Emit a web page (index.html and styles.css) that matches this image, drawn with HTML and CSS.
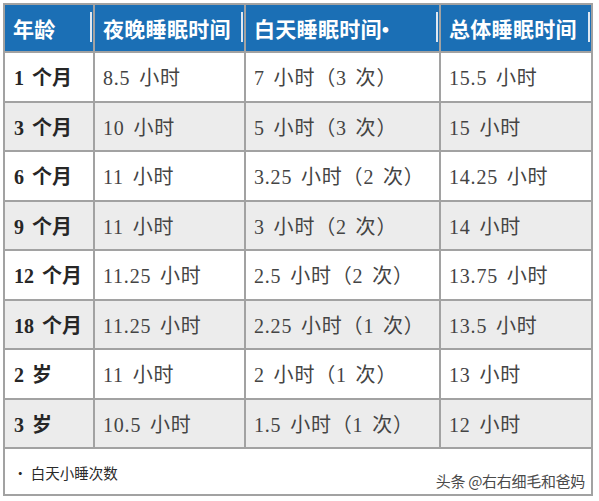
FILE: index.html
```html
<!DOCTYPE html>
<html lang="zh">
<head>
<meta charset="utf-8">
<link rel="stylesheet" href="styles.css">
</head>
<body>
<table class="sleep">
  <colgroup>
    <col class="c1"><col class="c2"><col class="c3"><col class="c4">
  </colgroup>
  <thead>
    <tr class="head">
      <th><span class="lbl">年龄</span></th>
      <th><span class="lbl">夜晚睡眠时间</span></th>
      <th><span class="lbl">白天睡眠时间•</span></th>
      <th><span class="lbl">总体睡眠时间</span></th>
    </tr>
  </thead>
  <tbody>
    <tr class="odd"><td class="age">1 个月</td><td>8.5 小时</td><td>7 小时（3 次）</td><td>15.5 小时</td></tr>
    <tr class="even"><td class="age">3 个月</td><td>10 小时</td><td>5 小时（3 次）</td><td>15 小时</td></tr>
    <tr class="odd"><td class="age">6 个月</td><td>11 小时</td><td>3.25 小时（2 次）</td><td>14.25 小时</td></tr>
    <tr class="even"><td class="age">9 个月</td><td>11 小时</td><td>3 小时（2 次）</td><td>14 小时</td></tr>
    <tr class="odd"><td class="age">12 个月</td><td>11.25 小时</td><td>2.5 小时（2 次）</td><td>13.75 小时</td></tr>
    <tr class="even"><td class="age">18 个月</td><td>11.25 小时</td><td>2.25 小时（1 次）</td><td>13.5 小时</td></tr>
    <tr class="odd"><td class="age">2 岁</td><td>11 小时</td><td>2 小时（1 次）</td><td>13 小时</td></tr>
    <tr class="even"><td class="age">3 岁</td><td>10.5 小时</td><td>1.5 小时（1 次）</td><td>12 小时</td></tr>
    <tr class="foot">
      <td colspan="4">
        <div class="foot-inner">
          <span class="note">• 白天小睡次数</span>
          <span class="mark">头条 @右右细毛和爸妈</span>
        </div>
      </td>
    </tr>
  </tbody>
</table>
</body>
</html>
```

FILE: styles.css
```css
html, body {
  margin: 0;
  padding: 0;
  background: #ffffff;
}

body {
  padding: 3px 0 0 3px;
  font-family: "Liberation Serif", "Noto Sans CJK SC", serif;
}

.sleep {
  border-collapse: collapse;
  table-layout: fixed;
  width: 590px;
  border: 2px solid #9c9c9c;
}

.c1 { width: 90px; }
.c2 { width: 151px; }
.c3 { width: 195px; }
.c4 { width: 152px; }

.sleep th,
.sleep td {
  border: 2px solid #a2a2a2;
  padding: 0 0 0 8px;
  text-align: left;
  vertical-align: middle;
  white-space: nowrap;
  overflow: hidden;
}

.head {
  height: 48px;
  background: #1b6fb5;
}

.head th {
  position: relative;
  color: #ffffff;
  font-weight: bold;
  font-size: 21px;
  letter-spacing: 0.3px;
  padding-left: 8px;
}

.head th::after {
  content: "";
  position: absolute;
  right: 1px;
  top: 7px;
  width: 2px;
  height: 30px;
  background: #dfe8f2;
}

.sleep tbody td {
  font-size: 20px;
  color: #444444;
  letter-spacing: 0.8px;
  word-spacing: 3px;
  height: 45px;
}

.odd { background: #ffffff; }
.even { background: #ececec; }

.odd, .even { height: 49.5px; }

.sleep tbody td.age {
  font-weight: bold;
  color: #262626;
  letter-spacing: 0;
  padding-left: 9px;
}

.foot { height: 47px; background: #ffffff; }

.sleep tbody .foot td {
  padding: 0;
  height: 45px;
  vertical-align: top;
  letter-spacing: 0;
  word-spacing: 0;
}

.foot-inner {
  display: flex;
  justify-content: space-between;
  align-items: flex-start;
  height: 45px;
  padding: 0 6px 0 8px;
}

.note {
  margin-top: 13px;
  font-family: "Noto Sans CJK SC", sans-serif;
  font-size: 14.5px;
  color: #2a2a2a;
}

.mark {
  margin-top: 21px;
  font-family: "Noto Sans CJK SC", sans-serif;
  font-size: 15px;
  color: #4a4a4a;
  letter-spacing: -0.3px;
  text-shadow: 0 0 2px #ffffff;
}
```
